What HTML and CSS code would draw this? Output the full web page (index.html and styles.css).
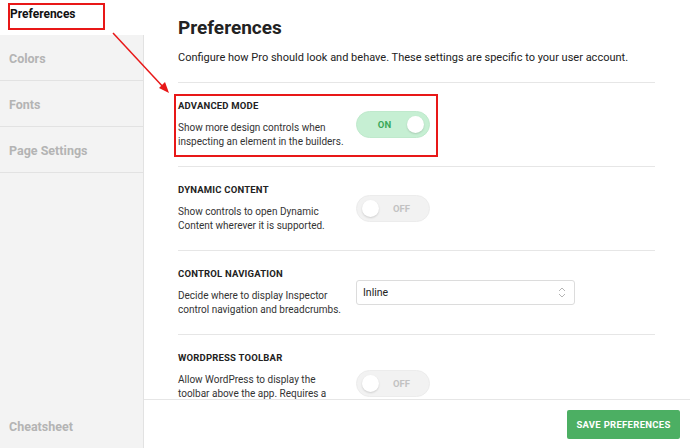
FILE: index.html
```html
<!DOCTYPE html>
<html lang="en">
<head>
    <meta charset="UTF-8">
    <title>Preferences</title>
    <link rel="stylesheet" href="styles.css">
</head>
<body>
    <div class="app">
        <nav class="sidebar">
            <div class="nav-item active">Preferences</div>
            <div class="nav-list">
                <div class="nav-item">Colors</div>
                <div class="nav-item">Fonts</div>
                <div class="nav-item">Page Settings</div>
                <div class="nav-item bottom">Cheatsheet</div>
            </div>
        </nav>

        <main class="main">
            <div class="content">
                <h1>Preferences</h1>
                <p class="intro">Configure how Pro should look and behave. These settings are specific to your user account.</p>

                <div class="row">
                    <div class="info">
                        <h2>Advanced Mode</h2>
                        <p>Show more design controls when inspecting an element in the builders.</p>
                    </div>
                    <div class="toggle on"><span class="label">ON</span><span class="knob"></span></div>
                </div>

                <div class="row">
                    <div class="info">
                        <h2>Dynamic Content</h2>
                        <p>Show controls to open Dynamic Content wherever it is supported.</p>
                    </div>
                    <div class="toggle"><span class="knob"></span><span class="label">OFF</span></div>
                </div>

                <div class="row">
                    <div class="info">
                        <h2>Control Navigation</h2>
                        <p>Decide where to display Inspector control navigation and breadcrumbs.</p>
                    </div>
                    <div class="select">
                        <span>Inline</span>
                        <svg width="8" height="11" viewBox="0 0 8 11"><path d="M1 4 L4 1 L7 4 M1 7 L4 10 L7 7" fill="none" stroke="#b5b5b5" stroke-width="1"/></svg>
                    </div>
                </div>

                <div class="row tall">
                    <div class="info">
                        <h2>WordPress Toolbar</h2>
                        <p>Allow WordPress to display the toolbar above the app. Requires a page refresh to take effect.</p>
                    </div>
                    <div class="toggle"><span class="knob"></span><span class="label">OFF</span></div>
                </div>
            </div>

            <footer class="footer">
                <button class="save">Save Preferences</button>
            </footer>
        </main>
    </div>

    <!-- annotations -->
    <div class="mark mark-nav"></div>
    <div class="mark mark-row"></div>
    <svg class="arrow" width="690" height="448" viewBox="0 0 690 448">
        <line x1="113" y1="33" x2="165" y2="89" stroke="#e81818" stroke-width="1.5"/>
        <polygon points="169,93 159,88 165,82" fill="#e81818"/>
    </svg>
</body>
</html>
```

FILE: styles.css
```css
body {
    margin: 0;
    font-family: Roboto, sans-serif;
    color: #222;
    background: #fff;
}
.app {
    display: flex;
    height: 448px;
    overflow: hidden;
}
.sidebar {
    width: 144px;
    flex-shrink: 0;
    display: flex;
    flex-direction: column;
}
.nav-item {
    height: 45px;
    line-height: 48px;
    padding-left: 9px;
    font-size: 12.5px;
    font-weight: 700;
    color: #b4b4b4;
    border-bottom: 1px solid #e2e2e2;
}
.nav-item.active {
    height: 35px;
    line-height: 28px;
    padding-left: 10px;
    font-size: 12px;
    color: #111;
    border-bottom: none;
}
.nav-list {
    flex: 1;
    display: flex;
    flex-direction: column;
    background: #f3f3f3;
    border-right: 1px solid #e2e2e2;
}
.nav-item.bottom {
    margin-top: auto;
    border-bottom: none;
}
.main {
    flex: 1;
    display: flex;
    flex-direction: column;
    min-width: 0;
}
.content {
    flex: 1;
    overflow: hidden;
    padding: 0 35px 0 34px;
}
h1 {
    margin: 15px 0 0;
    font-size: 19px;
    font-weight: 700;
    line-height: 26px;
}
.intro {
    margin: 8px 0 0;
    font-size: 11px;
    line-height: 18px;
    padding-bottom: 15px;
    border-bottom: 1px solid #e6e6e6;
}
.row {
    display: flex;
    align-items: center;
    height: 83px;
    border-bottom: 1px solid #e6e6e6;
}
.row.tall {
    height: 97px;
}
.info {
    width: 178px;
    flex-shrink: 0;
}
h2 {
    margin: 0 0 9px;
    font-size: 9.5px;
    font-weight: 700;
    text-transform: uppercase;
    letter-spacing: 0.2px;
    line-height: 12px;
}
.info p {
    margin: 0;
    width: 171px;
    font-size: 10px;
    line-height: 14px;
    color: #333;
}
.toggle {
    width: 74px;
    height: 27px;
    border-radius: 14px;
    box-sizing: border-box;
    display: flex;
    align-items: center;
    justify-content: space-between;
    padding: 0 5px 0 5px;
    background: #f2f2f2;
    border: 1px solid #ececec;
}
.toggle .label {
    flex: 1;
    text-align: center;
    font-size: 9.5px;
    font-weight: 700;
    color: #c2c2c2;
}
.toggle .knob {
    width: 17px;
    height: 17px;
    border-radius: 50%;
    background: #fff;
    box-shadow: 0 1px 2px rgba(0, 0, 0, 0.15);
}
.toggle.on {
    background: #c6efd3;
    border-color: #bfe9cc;
}
.toggle.on .label {
    color: #3aa85a;
}
.select {
    width: 219px;
    height: 25px;
    box-sizing: border-box;
    border: 1px solid #dcdcdc;
    border-radius: 3px;
    display: flex;
    align-items: center;
    justify-content: space-between;
    padding: 0 8px 0 6px;
    font-size: 10.5px;
    color: #222;
}
.footer {
    height: 48px;
    flex-shrink: 0;
    border-top: 1px solid #e6e6e6;
    display: flex;
    align-items: center;
    justify-content: flex-end;
    padding-right: 10px;
    background: #fff;
}
.save {
    width: 113px;
    height: 29px;
    border: none;
    border-radius: 2px;
    background: #4caf63;
    color: #fff;
    font-family: Roboto, sans-serif;
    font-size: 9.5px;
    font-weight: 700;
    text-transform: uppercase;
    letter-spacing: 0.3px;
}
.mark {
    position: absolute;
    border: 2px solid #e81818;
    box-sizing: border-box;
}
.mark-nav {
    left: 8px;
    top: 3px;
    width: 97px;
    height: 27px;
}
.mark-row {
    left: 174px;
    top: 94px;
    width: 264px;
    height: 63px;
}
.arrow {
    position: absolute;
    left: 0;
    top: 0;
}
```
